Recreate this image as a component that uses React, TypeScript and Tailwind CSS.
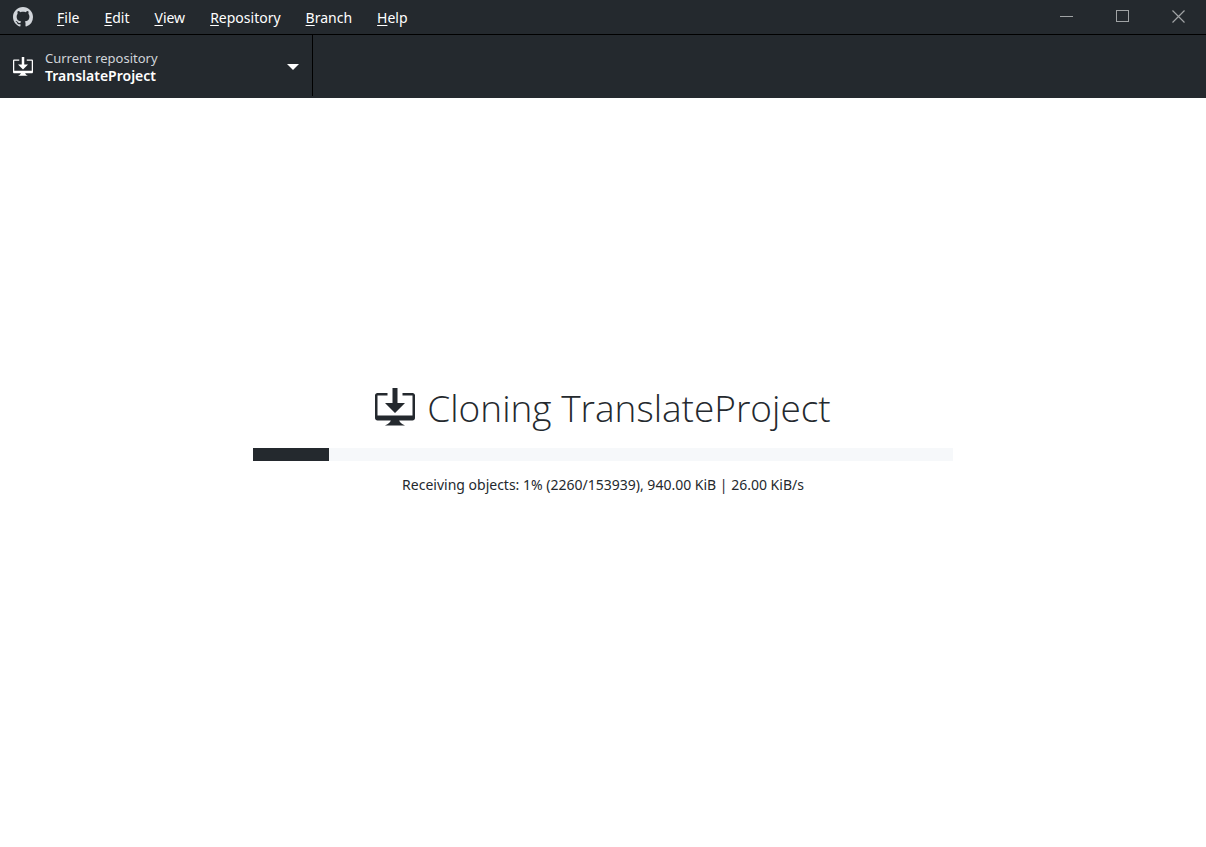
const menus = ['File', 'Edit', 'View', 'Repository', 'Branch', 'Help'];

const progress = { value: 76, max: 700 };

function MarkGithub({ className }: { className?: string }) {
  return (
    <svg viewBox="0 0 16 16" className={className} fill="currentColor" aria-hidden="true">
      <path
        fillRule="evenodd"
        d="M8 0C3.58 0 0 3.58 0 8c0 3.54 2.29 6.53 5.47 7.59.4.07.55-.17.55-.38 0-.19-.01-.82-.01-1.49-2.01.37-2.53-.49-2.69-.94-.09-.23-.48-.94-.82-1.13-.28-.15-.68-.52-.01-.53.63-.01 1.08.58 1.23.82.72 1.21 1.87.87 2.33.66.07-.52.28-.87.51-1.07-1.78-.2-3.64-.89-3.64-3.95 0-.87.31-1.59.82-2.15-.08-.2-.36-1.02.08-2.12 0 0 .67-.21 2.2.82.64-.18 1.32-.27 2-.27.68 0 1.36.09 2 .27 1.53-1.04 2.2-.82 2.2-.82.44 1.1.16 1.92.08 2.12.51.56.82 1.27.82 2.15 0 3.07-1.87 3.75-3.65 3.95.29.25.54.73.54 1.48 0 1.07-.01 1.93-.01 2.2 0 .21.15.46.55.38A8.013 8.013 0 0 0 16 8c0-4.42-3.58-8-8-8z"
      />
    </svg>
  );
}

function DesktopDownload({ className }: { className?: string }) {
  return (
    <svg viewBox="0 0 16 16" className={className} fill="currentColor" aria-hidden="true">
      <path
        fillRule="evenodd"
        d="M4 6h3V0h2v6h3l-4 4-4-4zm11-4h-4v1h4v8H1V3h4V2H1c-.55 0-1 .45-1 1v9c0 .55.45 1 1 1h5.34c-.25.61-.86 1.39-2.34 2h8c-1.48-.61-2.09-1.39-2.34-2H15c.55 0 1-.45 1-1V3c0-.55-.45-1-1-1z"
      />
    </svg>
  );
}

function WindowControls() {
  return (
    <div className="ml-auto flex self-stretch pb-[2px] text-[#a0a3a5]">
      <button type="button" aria-label="Minimize" className="flex w-14 items-center justify-center">
        <svg viewBox="0 0 13 13" className="size-[13px]" fill="none" stroke="currentColor" shapeRendering="crispEdges">
          <path d="M0 6.5h13" />
        </svg>
      </button>
      <button type="button" aria-label="Maximize" className="flex w-14 items-center justify-center">
        <svg viewBox="0 0 13 13" className="size-[13px]" fill="none" stroke="currentColor" shapeRendering="crispEdges">
          <path d="M.5.5h12v11H.5z" />
        </svg>
      </button>
      <button type="button" aria-label="Close" className="flex w-14 items-center justify-center">
        <svg viewBox="0 0 13 13" className="size-[13px]" fill="none" stroke="currentColor" strokeWidth="1.2">
          <path d="M.5.5l12 12M12.5.5l-12 12" />
        </svg>
      </button>
    </div>
  );
}

export default function App() {
  return (
    <div className="flex min-h-screen flex-col bg-white font-['Noto_Sans','Open_Sans',sans-serif] text-[#24292e]">
      <header className="flex h-[35px] items-center border-b border-black bg-[#24292e] pl-[13px] text-white">
        <MarkGithub className="size-5 text-[#d1d5da]" />
        <nav className="ml-3 flex gap-px pt-[2px]" aria-label="Application menu">
          {menus.map((name) => (
            <button key={name} type="button" className="px-3 text-sm">
              <span className="underline underline-offset-2">{name[0]}</span>
              {name.slice(1)}
            </button>
          ))}
        </nav>
        <WindowControls />
      </header>

      <div className="flex h-[63px] bg-[#24292e] pb-[2px]">
        <button
          type="button"
          className="flex w-[313px] items-center gap-3 border-r border-black px-[13px] pt-[2px] text-left text-white"
        >
          <DesktopDownload className="size-5 shrink-0" />
          <span className="flex flex-1 flex-col">
            <span className="text-[13px] leading-[18px] text-[#d1d5da]">Current repository</span>
            <span className="text-sm leading-[18px] font-semibold">TranslateProject</span>
          </span>
          <svg viewBox="0 0 12 6" className="h-[6px] w-3" fill="currentColor" aria-hidden="true">
            <path d="M0 0h12L6 6z" />
          </svg>
        </button>
      </div>

      <main className="flex flex-1 flex-col items-center justify-center px-6 pb-[68px]">
        <h1 className="flex items-center gap-3 font-['Open_Sans','Noto_Sans',sans-serif] text-[37px] leading-[52px] font-light whitespace-nowrap">
          <DesktopDownload className="size-10" />
          Cloning TranslateProject
        </h1>
        <div
          role="progressbar"
          aria-label="Clone progress"
          aria-valuenow={progress.value}
          aria-valuemax={progress.max}
          className="mt-[14px] h-[13px] w-full max-w-[700px] bg-[#f6f8fa]"
        >
          <div className="h-full bg-[#24292e]" style={{ width: `${(progress.value / progress.max) * 100}%` }} />
        </div>
        <p className="mt-[14px] text-sm">Receiving objects: 1% (2260/153939), 940.00 KiB | 26.00 KiB/s</p>
      </main>
    </div>
  );
}
